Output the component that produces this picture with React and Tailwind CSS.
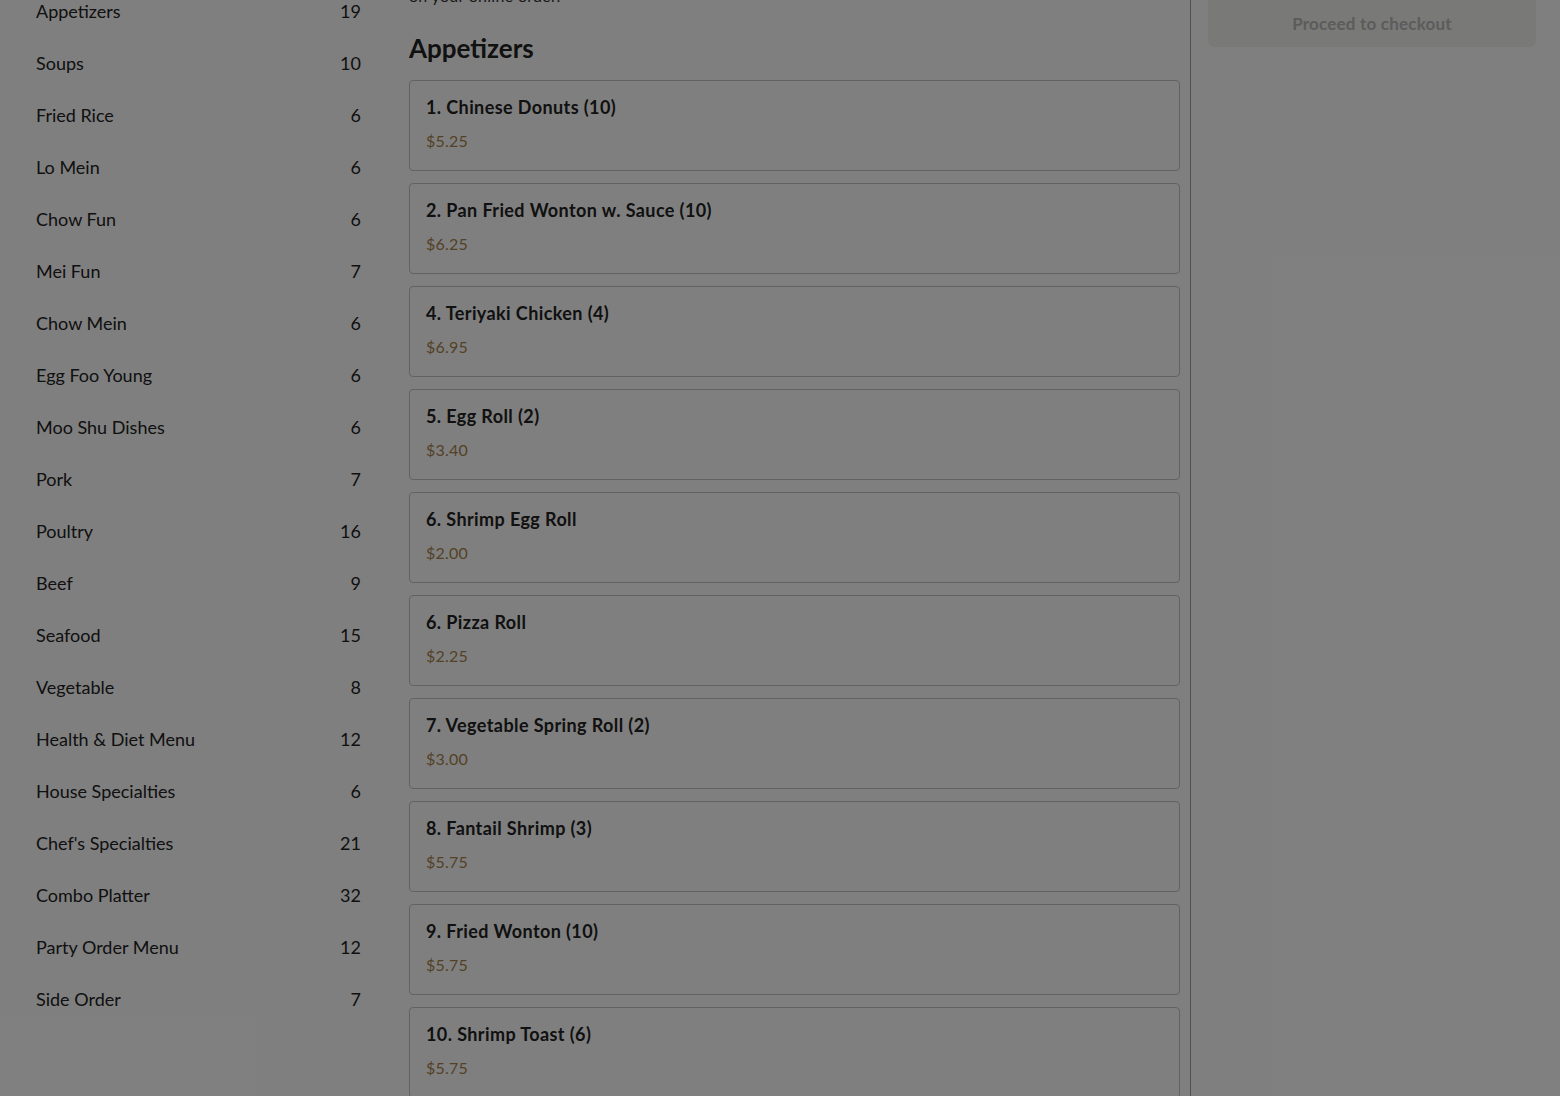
import React from 'react';

const categories = [
  ['Appetizers', 19],
  ['Soups', 10],
  ['Fried Rice', 6],
  ['Lo Mein', 6],
  ['Chow Fun', 6],
  ['Mei Fun', 7],
  ['Chow Mein', 6],
  ['Egg Foo Young', 6],
  ['Moo Shu Dishes', 6],
  ['Pork', 7],
  ['Poultry', 16],
  ['Beef', 9],
  ['Seafood', 15],
  ['Vegetable', 8],
  ['Health & Diet Menu', 12],
  ['House Specialties', 6],
  ["Chef's Specialties", 21],
  ['Combo Platter', 32],
  ['Party Order Menu', 12],
  ['Side Order', 7],
];

const items = [
  ['1. Chinese Donuts (10)', '$5.25'],
  ['2. Pan Fried Wonton w. Sauce (10)', '$6.25'],
  ['4. Teriyaki Chicken (4)', '$6.95'],
  ['5. Egg Roll (2)', '$3.40'],
  ['6. Shrimp Egg Roll', '$2.00'],
  ['6. Pizza Roll', '$2.25'],
  ['7. Vegetable Spring Roll (2)', '$3.00'],
  ['8. Fantail Shrimp (3)', '$5.75'],
  ['9. Fried Wonton (10)', '$5.75'],
  ['10. Shrimp Toast (6)', '$5.75'],
];

export default function App() {
  return (
    <div className="relative h-[1096px] overflow-hidden bg-white text-[#222] font-['Lato','Noto_Sans',sans-serif]">
      <div className="flex -mt-[15px]">
        {/* Category list */}
        <aside className="w-[385px] shrink-0 pl-9 pr-6">
          {categories.map(([name, count]) => (
            <div key={name} className="flex h-[52px] items-center justify-between text-[18px]">
              <span>{name}</span>
              <span>{count}</span>
            </div>
          ))}
        </aside>

        {/* Menu */}
        <main className="ml-6 w-[771px] shrink-0">
          <p className="text-[16px] leading-[22px] tracking-[0.3px] text-[#333]">on your online order.</p>
          <h2 className="mt-[24px] text-[26px] font-bold leading-[34px] text-[#222]">Appetizers</h2>
          <div className="mt-[15px] flex flex-col gap-3">
            {items.map(([name, price]) => (
              <div key={name} className="h-[91px] rounded-[4px] border border-[#c4c4c4] px-4 pt-[13px]">
                <div className="text-[18px] font-bold leading-[26px] tracking-[0.4px]">{name}</div>
                <div className="mt-[10px] text-[16px] leading-[22px] tracking-[0.2px] text-[#a8844c]">{price}</div>
              </div>
            ))}
          </div>
        </main>

        {/* Cart */}
        <section className="ml-[10px] min-h-[1200px] flex-1 border-l border-[#a0a0a0] pl-[17px] pr-6">
          <button className="flex h-[62px] w-full items-center justify-center rounded-[6px] bg-[#f2f2ef] pt-[15px] text-[17px] font-bold tracking-[0.2px] text-[#b8b8b8]">
            Proceed to checkout
          </button>
        </section>
      </div>

      {/* Modal backdrop */}
      <div className="absolute inset-0 bg-black/50" />
    </div>
  );
}
